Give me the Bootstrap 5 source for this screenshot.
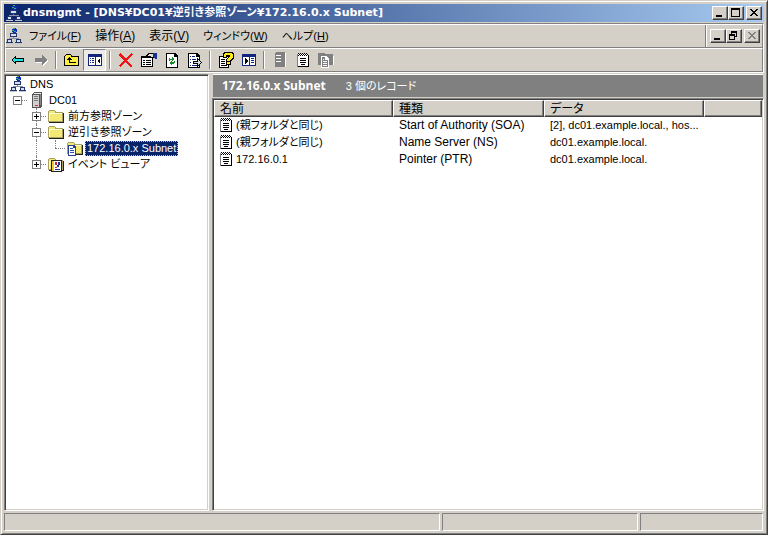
<!DOCTYPE html>
<html lang="ja">
<head>
<meta charset="utf-8">
<meta name="viewport" content="width=device-width, initial-scale=1">
<title>dnsmgmt</title>
<link href="https://cdn.jsdelivr.net/npm/bootstrap@5.3.0/dist/css/bootstrap.min.css" rel="stylesheet">
<style>
:root{--face:#d4d0c8;--shade:#808080;--dark:#404040}
body{font:12px/16px "Liberation Sans","Noto Sans CJK JP",sans-serif;color:#000;background:var(--face);font-feature-settings:"palt"}
svg{display:block;flex:none;width:16px;height:16px;shape-rendering:crispEdges}
button{font:inherit;color:inherit;background:none;border:0;padding:0}
.window{padding:3px 3px 3px;border:1px solid;border-color:var(--face) var(--dark) var(--dark) var(--face);box-shadow:inset 1px 1px #fff,inset -1px -1px var(--shade)}
.titlebar{height:18px;padding:0 2px 0 2px;background:linear-gradient(90deg,#0a246a,#a6caf0);color:#fff}
.titlebar h1{font:bold 11px/18px "DejaVu Sans","Noto Sans CJK JP",sans-serif;font-feature-settings:"palt";padding-left:1px}
.caption{flex:none;width:16px;height:14px;background:var(--face);color:#000;border:1px solid;border-color:#fff var(--dark) var(--dark) #fff;box-shadow:inset -1px -1px var(--shade)}
.caption:last-child{margin-left:2px}
.caption svg{width:14px;height:12px}
.caption:disabled{color:var(--shade)}
.bar{height:24px;border:1px solid;border-color:#fff var(--shade) var(--shade) #fff}
.bars{margin-top:1px;border:1px solid;border-color:var(--shade) #fff #fff var(--shade)}
.menu>button{padding:0 7px}
.menu>.kana{font-size:11px}
.mdi{border-left:1px solid var(--shade);box-shadow:inset 1px 0 #fff;padding:0 2px 0 4px}
.tool{width:23px;height:22px}
.tool.active{border:1px solid;border-color:var(--shade) #fff #fff var(--shade);background:#eceae6}
.divider{width:8px;height:18px;display:flex;justify-content:center}
.divider::before{content:"";width:2px;border-left:1px solid var(--shade);border-right:1px solid #fff}
.panes{display:grid;grid-template-columns:minmax(120px,205px) minmax(0,1fr);gap:3px;padding-top:1px}
.pane{border:1px solid;border-color:var(--shade) #fff #fff var(--shade);box-shadow:inset 1px 1px var(--dark),inset -1px -1px var(--face);background:#fff;padding:1px}
.tree{padding:0 2px}
.tree li{height:16px;display:flex;align-items:center;white-space:nowrap}
.tree .label{font-size:11px;padding:0 2px;margin-left:1px;line-height:15px}
.tree .chosen{background:#0a246a;color:#fff;outline:1px dotted #d8c080;outline-offset:-1px}
.pic{width:19px;flex:none;display:flex;justify-content:center}
.cell{width:19px;height:16px;flex:none;position:relative}
.line::before{content:"";position:absolute;left:9px;top:0;bottom:0;border-left:1px dotted var(--shade)}
.line.last::before{bottom:8px}
.turn::after{content:"";position:absolute;left:9px;right:0;top:8px;border-top:1px dotted var(--shade)}
.toggle{position:absolute;left:5px;top:4px;width:9px;height:9px;background:#fff;z-index:1}
.toggle svg{width:9px;height:9px}
.banner{height:23px;background:var(--shade);color:#fff;padding:0 9px;line-height:22px;border-top:1px solid #fff;margin:0 1px 1px}
.banner h2{font:bold 12px/22px "Open Sans",sans-serif;margin:0 20px 0 0}
.banner span{font-size:11px}
.records{table-layout:fixed;width:100%;border-collapse:separate;border-spacing:0}
.records th{height:17px;line-height:14px;font-weight:400;padding:0 5px;background:var(--face);border:1px solid;border-color:#fff var(--dark) var(--dark) #fff;box-shadow:inset -1px -1px var(--shade)}
.records td{height:17px;line-height:17px;padding:0 0 0 6px;white-space:nowrap}
.records td:nth-child(1){padding-left:4px;font-size:11px}
.records td:nth-child(3){font-size:11px}
.records td svg{margin-right:2px}
.title-col{width:179px}.kind{width:151px}.data{width:160px}
.state{display:grid;grid-template-columns:436fr 196fr 123fr;gap:2px;height:20px;padding:2px 1px 0 0}
.state div{border:1px solid;border-color:var(--shade) #fff #fff var(--shade)}
</style>
<script src="https://cdn.jsdelivr.net/npm/bootstrap@5.3.0/dist/js/bootstrap.bundle.min.js"></script>
</head>
<body>
<svg class="d-none" aria-hidden="true">
<symbol id="net" viewBox="0 0 16 16"><path d="M7 0h3v1h1v3h-1v1H7V4H6V1h1z" fill="#102ab4"/><path d="M7 0h2v1H7zM6 2h2v1H6zM8 3h2v1H8z" fill="#35b070"/><path d="M4 5h7v4H4z" fill="#24346c"/><path d="M5 6h5v2H5z" fill="#cfe0f4"/><path d="M7 9h1v1h5v1H3v-1h4z" fill="#8890a0"/><path d="M1 11h5v3h1v1H0v-1h1zM10 11h5v3h1v1H9v-1h1z" fill="#24346c"/><path d="M2 12h3v2H2zM11 12h3v2h-3z" fill="#cfe0f4"/><path d="M0 15h7v1H0zM9 15h7v1H9z" fill="#c4c4cc"/></symbol>
<symbol id="host" viewBox="0 0 16 16"><path d="M3 2l2-2h8v14l-2 2H3z" fill="#555"/><path d="M4 3h6v12H4z" fill="#d0d0d0"/><path d="M5 1h7l-1 1H4z" fill="#eee"/><path d="M11 2h1v11h-1z" fill="#888"/><path d="M5 4h4v1H5zM5 6h4v1H5zM5 8h4v1H5z" fill="#777"/><path d="M6 13h3v1H6z" fill="#f02020"/></symbol>
<symbol id="dir" viewBox="0 0 16 16"><path d="M0 3h1V2h6v1h1v1h7v10H0z" fill="#a8a060"/><path d="M1 3h6v2h7v8H1z" fill="#f5e976"/><path d="M1 5h13v1H1zM1 5h1v8H1z" fill="#fffbd0"/><path d="M15 5h1v10H1v-1h14z" fill="#222"/></symbol>
<symbol id="sheet" viewBox="0 0 16 16"><path d="M2 2h11v13H2z" fill="#fff"/><path d="M2 2h1v13H2z" fill="#808080"/><path d="M3 1h1v1H3zM5 1h1v1H5zM7 1h1v1H7zM9 1h1v1H9zM11 1h1v1h-1zM4 2h1v1H4zM6 2h1v1H6zM8 2h1v1H8zM10 2h1v1h-1zM12 2h1v1h-1zM3 3h1v1H3zM5 3h1v1H5zM7 3h1v1H7zM9 3h1v1H9zM11 3h1v1h-1zM13 3h1v12H3v-1h10zM5 6h6v1H5zM5 8h6v1H5zM5 10h6v1H5zM6 12h4v1H6z"/></symbol>
<symbol id="zone" viewBox="0 0 16 16"><use href="#dir"/><path d="M1 5h6l2 2v9H1z" fill="#25408c"/><path d="M2 6h4v2h2v7H2z" fill="#fff"/><path d="M3 8h3v1H3zM3 10h4v1H3zM3 12h4v1H3z" fill="#2850b0"/></symbol>
<symbol id="event" viewBox="0 0 16 16"><use href="#dir"/><path d="M3 4h11v12H3z" fill="#222"/><path d="M4 5h9v10H4z" fill="#fff"/><path d="M4 5h2v10H4z" fill="#e8c838"/><path d="M7 6h2v3H7zM7 11h2v1H7z" fill="#d02020"/><path d="M10 6h2v3h-2zM9 9h2v2H9zM7 13h5v1H7z" fill="#2030a0"/></symbol>
<symbol id="min" viewBox="0 0 14 12"><path d="M3 8h6v2H3z" fill="currentColor"/></symbol>
<symbol id="max" viewBox="0 0 14 12"><path d="M2 1h9v9H2zm1 2v6h7V3z" fill="currentColor" fill-rule="evenodd"/></symbol>
<symbol id="restore" viewBox="0 0 14 12"><path d="M4 1h6v6H8v3H2V4h2zm1 2v1h3v2h1V3zM3 6v3h4V6z" fill="currentColor" fill-rule="evenodd"/></symbol>
<symbol id="close" viewBox="0 0 14 12"><path d="M3 2h2v1h1v1h2V3h1V2h2v1h-1v1H9v1H8v1h1v1h1v1h1v1H9V8H8V7H6v1H5v1H3V8h1V7h1V6h1V5H5V4H4V3H3z" fill="currentColor"/></symbol>
<symbol id="minus" viewBox="0 0 9 9"><path d="M0 0h9v9H0zm1 1v7h7V1z" fill="#808080" fill-rule="evenodd"/><path d="M2 4h5v1H2z"/></symbol>
<symbol id="plus" viewBox="0 0 9 9"><use href="#minus"/><path d="M4 2h1v5H4z"/></symbol>
</svg>

<main class="window vh-100 d-flex flex-column overflow-hidden">
<header class="titlebar d-flex align-items-center flex-shrink-0">
<svg><use href="#net"/></svg>
<h1 class="m-0 flex-grow-1 text-nowrap overflow-hidden">dnsmgmt - [DNS¥DC01¥逆引き参照ゾーン¥172.16.0.x Subnet]</h1>
<button class="caption" aria-label="最小化"><svg><use href="#min"/></svg></button>
<button class="caption" aria-label="最大化"><svg><use href="#max"/></svg></button>
<button class="caption" aria-label="閉じる"><svg><use href="#close"/></svg></button>
</header>

<div class="bars flex-shrink-0">
<nav class="bar menu d-flex align-items-stretch">
<svg class="align-self-center"><use href="#net"/></svg>
<button class="kana">ファイル(<u>F</u>)</button><button>操作(<u>A</u>)</button><button>表示(<u>V</u>)</button><button class="kana">ウィンドウ(<u>W</u>)</button><button class="kana">ヘルプ(<u>H</u>)</button>
<div class="mdi ms-auto d-flex align-items-center">
<button class="caption" aria-label="子ウィンドウの最小化"><svg><use href="#min"/></svg></button>
<button class="caption" aria-label="元に戻す"><svg><use href="#restore"/></svg></button>
<button class="caption" aria-label="子ウィンドウを閉じる" disabled><svg><use href="#close"/></svg></button>
</div>
</nav>
<div class="bar d-flex align-items-center" role="toolbar" aria-label="標準">
<button class="tool d-grid" aria-label="戻る"><svg class="m-auto" viewBox="0 0 16 16"><path d="M1 8l5-5v3h8v4H6v3z"/><path d="M2 8l3-3v2h8v2H5v2z" fill="#19e4e8"/></svg></button>
<button class="tool d-grid" aria-label="進む"><svg class="m-auto" viewBox="0 0 16 16"><path d="M15 9l-5 5v-3H3V7h7V4z" fill="#fff"/><path d="M14 8l-5-5v3H2v4h7v3z" fill="#808080"/></svg></button>
<span class="divider"></span>
<button class="tool d-grid" aria-label="上へ"><svg class="m-auto" viewBox="0 0 16 16"><path d="M1 3h1V2h5v1h1v1h7v10H0V4h1z"/><path d="M2 3h5v2h7v8H1V4h1z" fill="#ffee45"/><path d="M5 5h1v1h1v1h1v1H6v2h6v1H5V8H3V7h1V6h1z"/></svg></button>
<button class="tool active d-grid" aria-label="ツリーの表示"><svg class="m-auto" viewBox="0 0 16 16"><path d="M1 2h14v12H1z" fill="#14247c"/><path d="M2 5h6v8H2zM9 5h5v8H9z" fill="#fff"/><path d="M3 6h1v1H3zM5 6h2v1H5zM3 8h1v1H3zM5 8h2v1H5zM3 10h1v1H3zM5 10h2v1H5z" fill="#14247c"/><path d="M13 6v6l-3-3z"/></svg></button>
<span class="divider"></span>
<button class="tool d-grid" aria-label="削除"><svg class="m-auto" viewBox="0 0 16 16"><path d="M2 1l6 6 5-6 2 1-6 6 5 6-1 1-6-5-4 5-2-1 5-6-6-5z" fill="#ef1515"/></svg></button>
<button class="tool d-grid" aria-label="プロパティ"><svg class="m-auto" viewBox="0 0 16 16"><path d="M0 4h12v11H0z"/><path d="M1 6h10v8H1z" fill="#fff"/><path d="M2 8h2v1H2zM5 8h5v1H5zM2 10h2v1H2zM5 10h5v1H5zM2 12h2v1H2zM5 12h5v1H5z"/><path d="M6 2l2-1h5v5h-2L9 5H5z"/><path d="M7 3l1-1h4v3h-2L9 4H6z" fill="#e8e0d0"/><path d="M12 1h4v6h-2l-2-2z" fill="#172e92"/></svg></button>
<button class="tool d-grid" aria-label="最新の情報に更新"><svg class="m-auto" viewBox="0 0 16 16"><path d="M2 1h9l3 3v12H2z"/><path d="M3 2h7v3h3v10H3z" fill="#fff"/><path d="M5 6h1v1h2V5l3 2-3 2V8H6v1H5zM11 11h-1v1H8v1l-3-2 3-2v1h2V9h1z" fill="#158a25"/></svg></button>
<button class="tool d-grid" aria-label="一覧のエクスポート"><svg class="m-auto" viewBox="0 0 16 16"><path d="M1 1h9l3 3v12H1z"/><path d="M2 2h7v3h3v10H2z" fill="#fff"/><path d="M3 4h1v1H3zM5 4h3v1H5zM3 7h1v1H3zM5 7h4v1H5zM3 10h1v1H3zM3 13h1v1H3zM5 13h5v1H5z" fill="#14247c"/><path d="M6 9h4V6l5 5-5 4v-3H6z"/><path d="M7 10h4V8l3 3-3 2v-2H7z" fill="#ddd"/></svg></button>
<span class="divider"></span>
<button class="tool d-grid" aria-label="ヘルプ"><svg class="m-auto" viewBox="0 0 16 16"><path d="M1 4h10v12H1z"/><path d="M2 5h8v10H2z" fill="#fff"/><path d="M3 7h4v1H3zM3 9h4v1H3zM3 11h4v1H3zM3 13h6v1H3z"/><path d="M6 0h8l2 2v4l-3 3v4H8V7l3-2V4H9v2H5V1z"/><path d="M7 1h6l2 1v4l-3 2v1H9V7l3-2V3H8v2H6V2zM9 10h3v2H9z" fill="#ffe818"/></svg></button>
<button class="tool d-grid" aria-label="操作ウィンドウ"><svg class="m-auto" viewBox="0 0 16 16"><path d="M1 2h14v12H1z" fill="#14247c"/><path d="M2 5h6v8H2zM9 5h5v8H9z" fill="#fff"/><path d="M10 6h3v1h-3zM10 8h3v1h-3zM10 10h3v1h-3z" fill="#14247c"/><path d="M4 6v6l3-3z"/></svg></button>
<span class="divider"></span>
<button class="tool d-grid" aria-label="サーバー"><svg class="m-auto" viewBox="0 0 16 16"><path d="M4 1h10v14H4z" fill="#fff"/><path d="M3 1l1-1h8l1 1v13l-1 1H3z" fill="#808080"/><path d="M4 3h5v1H4zM4 6h5v1H4zM4 9h5v1H4z" fill="#fff"/></svg></button>
<button class="tool d-grid" aria-label="新しいレコード"><svg class="m-auto"><use href="#sheet"/></svg></button>
<button class="tool d-grid" aria-label="新しいゾーン"><svg class="m-auto" viewBox="0 0 16 16"><path d="M1 3h6l1 1h8v9H1z" fill="#fff"/><path d="M0 1h6l1 1h8v11H0z" fill="#808080"/><path d="M3 4h5l3 3v9H3z" fill="#fff"/><path d="M4 5h3v3h3v7H4z" fill="#808080"/><path d="M5 7h1v1H5zM5 9h4v1H5zM5 11h4v1H5zM5 13h4v1H5z" fill="#fff"/></svg></button>
</div>
</div>

<div class="panes flex-grow-1 overflow-hidden">
<nav class="pane overflow-hidden" aria-label="コンソール ツリー">
<ul class="tree list-unstyled m-0">
<li><span class="pic"><svg><use href="#net"/></svg></span><span class="label">DNS</span></li>
<li><span class="cell turn"><button class="toggle" aria-label="DC01"><svg><use href="#minus"/></svg></button></span><span class="pic"><svg><use href="#host"/></svg></span><span class="label">DC01</span></li>
<li><span class="cell"></span><span class="cell line turn"><button class="toggle" aria-label="前方参照ゾーン"><svg><use href="#plus"/></svg></button></span><span class="pic"><svg><use href="#dir"/></svg></span><span class="label">前方参照ゾーン</span></li>
<li><span class="cell"></span><span class="cell line turn"><button class="toggle" aria-label="逆引き参照ゾーン"><svg><use href="#minus"/></svg></button></span><span class="pic"><svg><use href="#dir"/></svg></span><span class="label">逆引き参照ゾーン</span></li>
<li><span class="cell"></span><span class="cell line"></span><span class="cell line last turn"></span><span class="pic"><svg><use href="#zone"/></svg></span><span class="label chosen">172.16.0.x Subnet</span></li>
<li><span class="cell"></span><span class="cell line last turn"><button class="toggle" aria-label="イベント ビューア"><svg><use href="#plus"/></svg></button></span><span class="pic"><svg><use href="#event"/></svg></span><span class="label">イベント ビューア</span></li>
</ul>
</nav>
<section class="d-flex flex-column overflow-hidden">
<div class="banner d-flex flex-shrink-0"><h2>172.16.0.x Subnet</h2><span>3 個のレコード</span></div>
<div class="pane flex-grow-1 overflow-hidden">
<table class="records">
<colgroup><col class="title-col"><col class="kind"><col class="data"><col></colgroup>
<thead><tr><th>名前</th><th>種類</th><th>データ</th><th></th></tr></thead>
<tbody>
<tr><td><span class="d-flex"><svg><use href="#sheet"/></svg>(親フォルダと同じ)</span></td><td>Start of Authority (SOA)</td><td>[2], dc01.example.local., hos...</td><td></td></tr>
<tr><td><span class="d-flex"><svg><use href="#sheet"/></svg>(親フォルダと同じ)</span></td><td>Name Server (NS)</td><td>dc01.example.local.</td><td></td></tr>
<tr><td><span class="d-flex"><svg><use href="#sheet"/></svg>172.16.0.1</span></td><td>Pointer (PTR)</td><td>dc01.example.local.</td><td></td></tr>
</tbody>
</table>
</div>
</section>
</div>
<footer class="state flex-shrink-0"><div></div><div></div><div></div></footer>
</main>
</body>
</html>
